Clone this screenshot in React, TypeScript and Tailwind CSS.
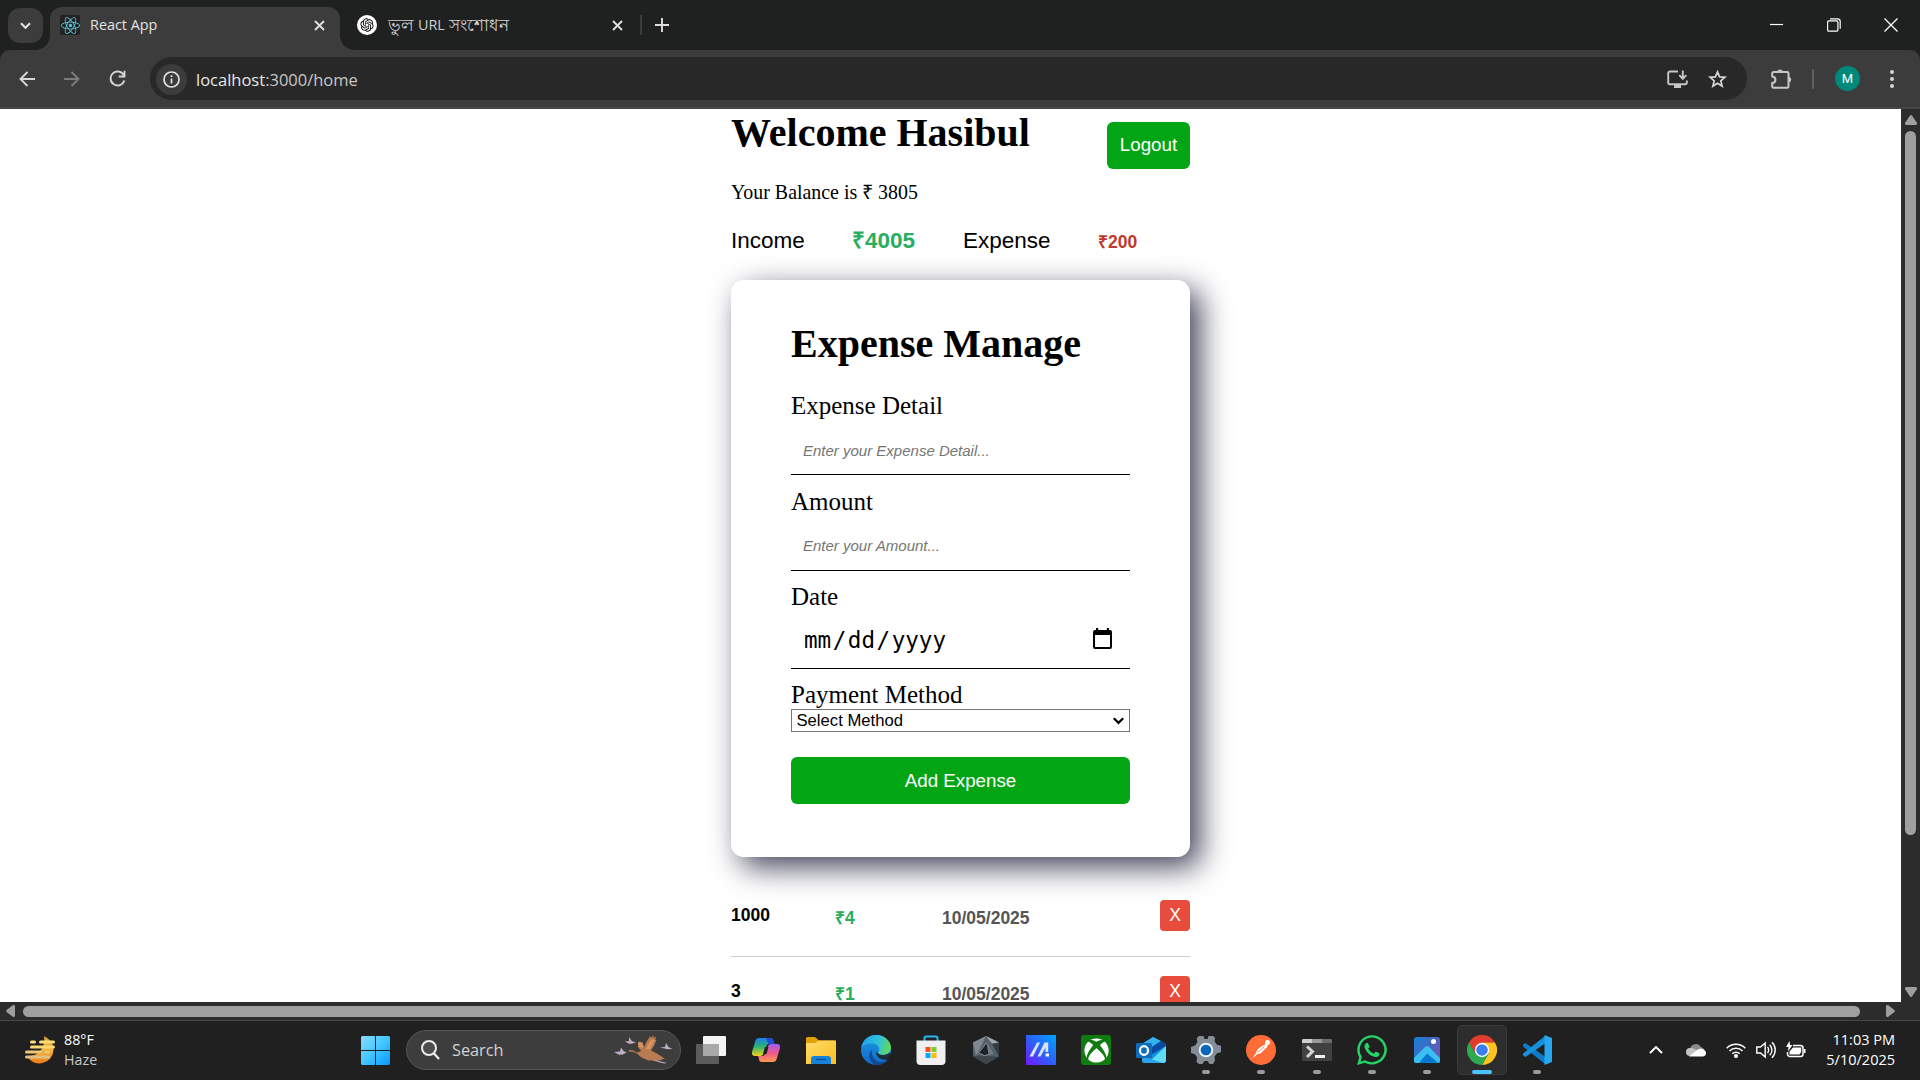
import React from "react";
import { FaReact, FaWhatsapp, FaXbox } from "react-icons/fa";
import { RiOpenaiFill } from "react-icons/ri";

const ui = "font-['Open_Sans','Noto_Sans',sans-serif]";

function Close({ className = "" }: { className?: string }) {
  return (
    <svg className={`h-[11px] w-[11px] ${className}`} viewBox="0 0 11 11" fill="none" stroke="#dedede" strokeWidth="1.9">
      <path d="M1 1l9 9M10 1l-9 9" />
    </svg>
  );
}

function TabStrip() {
  return (
    <div className="flex h-[50px] bg-[#1f2120] text-[14px] text-[#e3e3e3]">
      <div className="ml-2 mt-2 flex h-[35px] w-[35px] items-center justify-center rounded-[12px] bg-[#3c3c3c]">
        <svg width="11" height="8" viewBox="0 0 11 8" fill="none" stroke="#e3e3e3" strokeWidth="2.1">
          <path d="M1 1.2l4.5 4.6L10 1.2" />
        </svg>
      </div>
      <div className="relative ml-[7px] mt-[7px] flex h-[43px] w-[290px] items-center rounded-t-[12px] bg-[#3c3c3c] pb-[7px] pl-[10px]">
        <span className="absolute bottom-0 left-[-14px] h-[14px] w-[14px] bg-[radial-gradient(circle_at_0_0,transparent_13.5px,#3c3c3c_14px)]" />
        <span className="absolute bottom-0 right-[-14px] h-[14px] w-[14px] bg-[radial-gradient(circle_at_100%_0,transparent_13.5px,#3c3c3c_14px)]" />
        <span className="flex h-5 w-5 items-center justify-center rounded-[2px] bg-[#222]">
          <FaReact className="h-[19px] w-[19px] text-[#58c4dc]" />
        </span>
        <span className="ml-[10px] w-[219px] whitespace-nowrap text-[14.4px]">React App</span>
        <Close className="ml-[5px]" />
      </div>
      <div className="ml-[17px] mt-[7px] flex h-[36px] items-center">
        <span className="flex h-5 w-5 items-center justify-center rounded-full bg-white">
          <RiOpenaiFill className="h-4 w-4 text-black" />
        </span>
        <span className="ml-[11px] flex h-5 w-[224px] items-center gap-1 whitespace-nowrap text-[#cfcfcf]">
          <span className="text-[16.5px] leading-5">ভুল</span>
          <span className="text-[14.4px] leading-5">URL</span>
          <span className="text-[16.5px] leading-5">সংশোধন</span>
        </span>
        <Close />
        <span className="ml-[17px] h-5 w-[2px] bg-[#3c3c3c]" />
        <svg className="ml-[13px] h-[14px] w-[14px]" viewBox="0 0 14 14" stroke="#dedede" strokeWidth="1.9">
          <path d="M7 0v14M0 7h14" />
        </svg>
      </div>
      <div className="ml-auto mr-[22px] flex h-[49px] items-center gap-[43px]">
        <svg width="14" height="14" viewBox="0 0 14 14" stroke="#fff" strokeWidth="1.2"><path d="M0 6.5h13" /></svg>
        <svg width="14" height="14" viewBox="0 0 14 14" fill="none" stroke="#fff" strokeWidth="1.2">
          <rect x=".6" y="2.9" width="10.3" height="10.3" rx="1.3" />
          <path d="M3 .9h7.6a2.6 2.6 0 0 1 2.6 2.6v7.3" />
        </svg>
        <svg width="14" height="14" viewBox="0 0 14 14" stroke="#fff" strokeWidth="1.3"><path d="M.5.5l13 13M13.5.5l-13 13" /></svg>
      </div>
    </div>
  );
}

function Toolbar() {
  return (
    <div className="h-[59px] bg-[#1f2120]">
      <div className="flex h-[59px] items-center rounded-t-[10px] border-b-2 border-[#464646] bg-[#3c3c3c]">
        <svg className="ml-[19px] h-4 w-4" viewBox="0 0 16 16" fill="none" stroke="#d6d6d6" strokeWidth="1.9">
          <path d="M16 8H2M8.5 1L1.5 8l7 7" />
        </svg>
        <svg className="ml-[29px] h-4 w-4" viewBox="0 0 16 16" fill="none" stroke="#7d7d7d" strokeWidth="1.9">
          <path d="M0 8h14M7.5 1l7 7-7 7" />
        </svg>
        <svg className="ml-[29px] h-[17px] w-[17px]" viewBox="0 0 17 17" fill="none" stroke="#d6d6d6" strokeWidth="1.9">
          <path d="M15 5.6A7 7 0 1 0 15.3 10.5M15.5 .8v5.7H9.7" />
        </svg>
        <div className="ml-[24px] flex h-[43px] w-[1597px] items-center rounded-full bg-[#282828] pl-[6px] pt-px">
          <span className="flex h-[31px] w-[31px] items-center justify-center rounded-full bg-[#3c3c3c]">
            <svg width="17" height="17" viewBox="0 0 17 17" fill="none" stroke="#e3e3e3" strokeWidth="1.7">
              <circle cx="8.5" cy="8.5" r="7.5" />
              <path d="M8.5 7.5v5M8.5 4.2v1.9" />
            </svg>
          </span>
          <span className="ml-[9px] pt-[2px] text-[16.5px] text-[#c7c7c7]"><span className="text-[#e6e6e6]">localhost</span>:3000/home</span>
          <svg className="ml-auto h-[18px] w-[21px]" viewBox="0 0 21 18" fill="none" stroke="#c7c7c7" strokeWidth="1.9">
            <path d="M11 1.5H3A1.8 1.8 0 0 0 1.2 3.3v9.2A1.8 1.8 0 0 0 3 14.3h15a1.8 1.8 0 0 0 1.8-1.8V10.5M15.8 .5v8M12.3 5.2l3.5 3.6 3.5-3.6" />
            <path d="M7 15h7v3H7z" fill="#c7c7c7" stroke="none" />
          </svg>
          <svg className="ml-[20px] mr-[20px] h-[19px] w-[19px]" viewBox="0 0 19 19" fill="none" stroke="#d6d6d6" strokeWidth="1.7">
            <path d="M9.5 1.9l2.1 5 5.3.4-4.1 3.5 1.3 5.3-4.6-2.8-4.6 2.8 1.3-5.3L2.1 7.3l5.3-.4z" />
          </svg>
        </div>
        <svg className="ml-[24px] h-[22px] w-[21px]" viewBox="0 0 21 22" fill="none" stroke="#c7c7c7" strokeWidth="2">
          <path d="M2.5 4h13.7a1.3 1.3 0 0 1 1.3 1.3v13.2a1.3 1.3 0 0 1-1.3 1.3H2.5a1.3 1.3 0 0 1-1.3-1.3V15c4.3-.3 4.3-6.3 0-6.6V5.3A1.3 1.3 0 0 1 2.5 4z" />
          <path d="M6 3.5a3.2 3.2 0 0 1 6 0zM18 8.7a3 3 0 0 1 0 5.8z" fill="#c7c7c7" stroke="none" />
        </svg>
        <span className="ml-[20px] h-5 w-[2px] rounded bg-[#5f5f5f]" />
        <span className="ml-[21px] flex h-[25px] w-[25px] items-center justify-center rounded-full bg-[#00897b] font-[Roboto,sans-serif] text-[13px] text-white">M</span>
        <span className="ml-[30px] flex flex-col gap-[3px]">
          <i className="h-1 w-1 rounded-full bg-[#d6d6d6]" />
          <i className="h-1 w-1 rounded-full bg-[#d6d6d6]" />
          <i className="h-1 w-1 rounded-full bg-[#d6d6d6]" />
        </span>
      </div>
    </div>
  );
}

const label = "text-[25px] leading-[28px]";
const field =
  "block w-full border-b border-black bg-transparent pl-[12px] font-['Liberation_Sans',sans-serif] text-[15px] outline-none placeholder:italic placeholder:text-[#757575]";

function Row({ name, amount }: { name: string; amount: string }) {
  return (
    <div className="mb-[19px] flex h-[57px] items-start border-b border-[#ccc] font-['Liberation_Sans',sans-serif] text-[17.5px] font-bold leading-5">
      <span className="mt-[5px] w-[104px]">{name}</span>
      <span className="mt-[8px] w-[107px] text-[#27ae60]">{amount}</span>
      <span className="mt-[8px] text-[#555]">10/05/2025</span>
      <button className="ml-auto h-[31px] w-[30px] rounded-[4px] bg-[#e74c3c] pb-px text-[17.5px] font-normal text-white">X</button>
    </div>
  );
}

function Page() {
  return (
    <div className="flex-1 overflow-hidden bg-white font-['Liberation_Serif',serif] text-black">
      <div className="ml-[731px] w-[459px]">
        <div className="flex h-[72px] justify-between">
          <h1 className="pt-px text-[40px] font-bold leading-[46px]">Welcome Hasibul</h1>
          <button className="mt-[13px] h-[47px] w-[83px] rounded-[6px] bg-[#02a614] font-['Liberation_Sans',sans-serif] text-[18.75px] text-white">Logout</button>
        </div>
        <p className="text-[19.9px] leading-[23px]">Your Balance is ₹ 3805</p>
        <div className="mt-6 flex h-[26px] font-['Liberation_Sans',sans-serif] text-[22.5px] leading-[26px]">
          <span className="w-[121px]">Income</span>
          <span className="w-[111px] font-bold text-[#27ae60]">₹4005</span>
          <span className="w-[135px]">Expense</span>
          <span className="text-[17.5px] font-bold leading-[29px] text-[#c0392b]">₹200</span>
        </div>
        <div className="relative mt-[26px] h-[577px] rounded-[12.5px] bg-white px-[60px] pt-[41px] shadow-[10px_10px_30px_0_#42445a]">
          <h1 className="text-[40px] font-bold leading-[46px]">Expense Manage</h1>
          <div className={`${label} mt-[25px]`}>Expense Detail</div>
          <input className={`${field} h-[55px] pt-[6px]`} placeholder="Enter your Expense Detail..." />
          <div className={`${label} mt-[13px]`}>Amount</div>
          <input className={`${field} h-[55px] pt-[4px]`} placeholder="Enter your Amount..." />
          <div className={`${label} mt-[12px]`}>Date</div>
          <div className="flex h-[58px] items-center justify-between border-b border-black pl-[13px] pr-[18px] font-['DejaVu_Sans_Mono',monospace] text-[22.6px]">
            <span className="pt-[2px]">mm<span className="px-[1.5px]">/</span>dd<span className="px-[1.5px]">/</span>yyyy</span>
            <svg className="mb-[3px] h-[21px] w-[19px]" viewBox="0 0 19 21">
              <path d="M3 0h2.2v2h8.6V0H16v2h1a2 2 0 0 1 2 2v15a2 2 0 0 1-2 2H2a2 2 0 0 1-2-2V4a2 2 0 0 1 2-2h1zM2 7v12h15V7z" fillRule="evenodd" />
            </svg>
          </div>
          <div className={`${label} mt-[12px]`}>Payment Method</div>
          <div className="flex h-[23px] items-center justify-between border border-[#767676] pl-[4.5px] pr-[5px] font-['Liberation_Sans',sans-serif] text-[16.67px] leading-5">
            Select Method
            <svg width="11" height="8" viewBox="0 0 11 8" fill="none" stroke="#000" strokeWidth="2.2"><path d="M.8 1.2l4.7 4.7 4.7-4.7" /></svg>
          </div>
          <button className="mt-[25px] h-[47px] w-full rounded-[6px] bg-[#02a614] pt-px font-['Liberation_Sans',sans-serif] text-[18.75px] text-white">Add Expense</button>
        </div>
        <div className="relative mt-[43px]">
          <Row name="1000" amount="₹4" />
          <Row name="3" amount="₹1" />
        </div>
      </div>
    </div>
  );
}

function Icon({ children, dot, active }: { children: React.ReactNode; dot?: boolean; active?: boolean }) {
  return (
    <div className="flex w-[55.1px] justify-center">
      <div className={`relative flex h-[50px] w-[50px] items-center justify-center rounded-[5px] ${active ? "border border-[#3a3a3a] bg-[#2d2d2d]" : ""}`}>
        {children}
        {dot && <span className="absolute bottom-[1px] left-[21px] h-1 w-2 rounded-full bg-[#9a9a9a]" />}
        {active && <span className="absolute bottom-0 left-[14px] h-1 w-5 rounded-full bg-[#4cc2ff]" />}
      </div>
    </div>
  );
}

function Goose() {
  return (
    <svg width="59" height="30" viewBox="0 0 59 30">
      <g fill="#bdaec4">
        <path d="M0 17l6-.5 1-4 3 4 3 .5-4 2.5-4 .3z" />
        <path d="M11 6.5l4-.5V2l3 4.3 4 1-4 1.400h-3z" />
        <path d="M46 12.5l5-.5 1-4 2.500 4 4 2-5 .3z" />
        <path d="M39 24l8 2.5 6 1.5-3 .6-11-3.2z" />
      </g>
      <path d="M14 16.5l1.800-1.500 3 .2 4 2.300 4.500-1.500-3-3.500-.5-4.500 1.500-1.500 3.500 1 1.500 5 1.500-4.500 4.500-7 .8 2L39.500 0l-.2 3 3-1.500L41 4.500l1.500.2-2.500 6-3 4.800 6 3 7.500 5-4 1.800-12 .3-7-3-4.500-4.100-4-1.700z" fill="#b97c50" />
      <path d="M24.500 11.500l0-4 3.500.5 1 5zM31.500 14l5.500-9 4-.5-5 9.500z" fill="#d99463" />
    </svg>
  );
}

function Taskbar() {
  return (
    <div className={`flex h-[60px] items-center border-t border-[#474747] bg-[#202020] pb-px ${ui}`}>
      <svg className="ml-[25px] h-[28px] w-[30px]" viewBox="0 0 30 28">
        <defs>
          <linearGradient id="moon" x1="0" y1="0" x2="0" y2="1"><stop offset="0" stopColor="#d99a3c" /><stop offset=".5" stopColor="#f2b43c" /><stop offset="1" stopColor="#ee7b16" /></linearGradient>
        </defs>
        <path d="M19 0c6 3 10 8 9.5 14A14 13.5 0 0 1 2 20c9 1 19-6 17-20z" fill="url(#moon)" />
        <g strokeWidth="3" strokeLinecap="round" fill="none">
          <path d="M6.5 6h3M15.5 6h13" stroke="#ffdc73" />
          <path d="M6.5 11h22" stroke="#fbd772" />
          <path d="M1.5 16h14M20.5 16h3" stroke="#ecc777" />
          <path d="M1.5 21h22" stroke="#dec084" />
        </g>
      </svg>
      <div className="ml-[9px] w-[297px] pb-px text-[14.3px] leading-5 text-white">
        <div>88°F</div>
        <div className="text-[#c8c8c8]">Haze</div>
      </div>
      <svg className="h-[29px] w-[29px]" viewBox="0 0 29 29">
        <defs><linearGradient id="win" x1="0" y1="0" x2="1" y2="1"><stop offset="0" stopColor="#8adcff" /><stop offset=".5" stopColor="#43c6fd" /><stop offset="1" stopColor="#0a96ff" /></linearGradient></defs>
        <path d="M1 0h13v14H0V1zM15 0h13l1 1v13H15zM0 15h14v14H1l-1-1zM15 15h14v13l-1 1H15z" fill="url(#win)" />
      </svg>
      <div className="ml-4 mr-[2px] flex h-10 w-[275px] items-center rounded-full border border-[#555] bg-[#3d3d3d] pl-[14px] pr-[7px]">
        <svg width="19" height="20" viewBox="0 0 19 20" fill="none" stroke="#ededed" strokeWidth="2"><circle cx="8" cy="8" r="7" fill="#4d4d4d" /><path d="M13 13.5l5 5.5" strokeWidth="2.3" /></svg>
        <span className="ml-[12px] pt-px text-[16.3px] text-[#d2d2d2]">Search</span>
        <span className="ml-auto"><Goose /></span>
      </div>
      <Icon>
        <svg width="30" height="28" viewBox="0 0 30 28">
          <rect y="8" width="23" height="20" rx="1" fill="#5c5c5c" /><rect x="7" width="23" height="20" rx="1" fill="#f4f4f4" /><path d="M7 8h16v12H7z" fill="#a9a9a9" />
        </svg>
      </Icon>
      <Icon>
        <svg width="28" height="26" viewBox="0 0 28 26">
          <defs>
            <linearGradient id="cpA" x1="0" y1="0" x2="0" y2="1"><stop offset="0" stopColor="#1a7ff0" /><stop offset=".5" stopColor="#32b56c" /><stop offset="1" stopColor="#f5d21d" /></linearGradient>
            <linearGradient id="cpB" x1="0" y1="0" x2="0" y2="1"><stop offset="0" stopColor="#a35cf3" /><stop offset=".5" stopColor="#f0588d" /><stop offset="1" stopColor="#ff9a4c" /></linearGradient>
          </defs>
          <path d="M7 1h11c2 0 3 1 3.5 3l1 3h-5c-2 0-3 1-3.5 3l-2 6c-.8 2-2 3-4 3H3c-3 0-3.5-2-2.700-5l3-10C4 2 5 1 7 1z" fill="url(#cpA)" />
          <path d="M14 1h4c2 0 3 1 3.5 3l1 3h-6z" fill="#234bd6" />
          <path d="M21 25H10c-2 0-3-1-3-3l-1-3h4c2 0 3-1 3.5-3l2-6c.8-2 2-3 4-3H25c3 0 3.500 2 2.700 5l-3 10c-.7 2-1.700 3-3.700 3z" fill="url(#cpB)" />
          <path d="M13 10h3.500l-2 7H11z" fill="#202020" />
        </svg>
      </Icon>
      <Icon>
        <svg width="30" height="27" viewBox="0 0 30 27">
          <defs><linearGradient id="fold" x1="0" y1="0" x2="1" y2="1"><stop offset="0" stopColor="#ffdc6b" /><stop offset="1" stopColor="#fcbe21" /></linearGradient></defs>
          <path d="M0 1.5A1.5 1.5 0 0 1 1.5 0H9l4 3.500h15a2 2 0 0 1 2 2V9H0z" fill="#e0a008" />
          <path d="M0 6h9l4-2.500h17V27H0z" fill="url(#fold)" />
          <path d="M5 27v-5a3 3 0 0 1 3-3h14a3 3 0 0 1 3 3v5z" fill="#1583d8" /><path d="M10 22.5h10" stroke="#0a4f96" strokeWidth="1.3" />
        </svg>
      </Icon>
      <Icon>
        <svg width="30" height="30" viewBox="0 0 30 30">
          <defs>
            <linearGradient id="edA" x1="0" y1=".3" x2="1" y2=".5"><stop offset="0" stopColor="#1ca0e8" /><stop offset=".55" stopColor="#2fc2df" /><stop offset="1" stopColor="#63d957" /></linearGradient>
            <linearGradient id="edB" x1="0" y1="0" x2="0" y2="1"><stop offset="0" stopColor="#1b9be2" /><stop offset="1" stopColor="#1167c9" /></linearGradient>
          </defs>
          <circle cx="15" cy="15" r="15" fill="url(#edB)" />
          <path d="M.3 13C1.5 5 7.5 0 15 0c9 0 15 6.5 15 12.5 0 4.5-3.5 7.5-8 7.5-3.5 0-5.2-1.2-5-2.3.2-.9 1.3-1.4 1.3-3.5C18.3 11 15 8.5 11 8.5 6 8.5 1.5 10.5.3 13z" fill="url(#edA)" />
          <path d="M11.5 14.5C9.5 20 13 27 20 27c3 0 5-.8 7.5-2.5C25 28 20.5 30 15.5 30 9 29 5.500 19 11.500 14.500z" fill="#104a93" />
          <path d="M17 17.7c-.2 1.1 1.5 2.3 5 2.3 2.8 0 5-.9 6.600-2.500L30 21l-2.500 3.500C24 26 15.500 24 15 17.500z" fill="#202020" opacity=".85" />
        </svg>
      </Icon>
      <Icon>
        <svg width="30" height="30" viewBox="0 0 30 30">
          <path d="M8.5 6V3a1.5 1.5 0 0 1 1.5-1.5h10A1.5 1.5 0 0 1 21.5 3v3" fill="none" stroke="#2bb4ee" strokeWidth="2" />
          <path d="M.5 5.5h29V26a4 4 0 0 1-4 4h-21a4 4 0 0 1-4-4z" fill="#f0f0f0" />
          <path d="M9.5 12h5v5h-5z" fill="#f1511b" /><path d="M15.5 12h5v5h-5z" fill="#80cc28" /><path d="M9.5 18h5v5h-5z" fill="#00adef" /><path d="M15.5 18h5v5h-5z" fill="#fbbc09" />
        </svg>
      </Icon>
      <Icon>
        <svg width="26" height="28" viewBox="0 0 26 28">
          <path d="M13 0l13 6.5v14L13 28 0 20.5v-14z" fill="#566069" />
          <path d="M13 0l13 6.5-7 1z" fill="#a1a9b0" /><path d="M0 6.5L13 0 3 20z" fill="#7f8890" /><path d="M26 6.5v14L19 8z" fill="#343b41" /><path d="M0 20.5L13 28l13-7.5-22-1z" fill="#3f474e" />
          <path d="M13.500 7l6 10.500-8 2L5.500 17z" fill="#1d2226" stroke="#8f979e" strokeWidth=".9" />
          <path d="M13.500 6.500l6.500 11-4.500 1.300z" fill="#727c84" />
        </svg>
      </Icon>
      <Icon>
        <svg width="30" height="30" viewBox="0 0 30 30">
          <defs><linearGradient id="ma" x1="0" y1="1" x2="1" y2="0"><stop offset="0" stopColor="#7416ff" /><stop offset=".5" stopColor="#2b62fb" /><stop offset="1" stopColor="#00a4ff" /></linearGradient></defs>
          <path d="M0 0h30v30H0z" fill="url(#ma)" />
          <path d="M3.500 21.500L11 7.500h3L7 21.500zM11.500 21.500l7-14h3.700v9.500h-2.700v-4.500l-5 9z" fill="#d6e4ff" /><path d="M19.500 18.500h3.500v3h-3.500z" fill="#fff" />
        </svg>
      </Icon>
      <Icon>
        <span className="flex h-[30px] w-[30px] items-center justify-center rounded-[3px] bg-[#107c10]"><FaXbox className="h-[25px] w-[25px] text-white" /></span>
      </Icon>
      <Icon>
        <svg width="30" height="26" viewBox="0 0 30 26">
          <path d="M6 7L17 0l13 7v16a3 3 0 0 1-3 3H9a3 3 0 0 1-3-3z" fill="#1490df" />
          <path d="M17 0l8 4-14 9-5-4V7z" fill="#33b1ef" /><path d="M25 4l5 3v2L13 19l-3-5z" fill="#0a4aa0" /><path d="M30 9v14a3 3 0 0 1-3 3H12z" fill="#5fdcf8" />
          <path d="M6 19l21 7H9a3 3 0 0 1-3-3z" fill="#2aa5ec" />
          <rect y="6" width="16" height="15" rx="1.5" fill="#0f6cbd" /><ellipse cx="8" cy="13.5" rx="4" ry="4.3" fill="none" stroke="#fff" strokeWidth="2.2" />
        </svg>
      </Icon>
      <Icon dot>
        <svg width="30" height="28" viewBox="0 0 30 28">
          <path d="M11 0h1.5l1 3h3l1-3H22l2 1.5-.4 4 2.4 3.2 4 1v6.6l-4 1-2.4 3.2.4 4L22 28h-3.5l-2-3h-3l-2 3H8l-2.500-2 .6-4.500-2.200-3.200L0 17v-6l4-1.500 2.300-3.300L5.800 2 8 0z" fill="#848d95" />
          <circle cx="15" cy="14" r="6.3" fill="#0b66b8" stroke="#e8f2fa" strokeWidth="1.9" />
        </svg>
      </Icon>
      <Icon dot>
        <svg width="30" height="30" viewBox="0 0 30 30">
          <circle cx="15" cy="15" r="15" fill="#ff6c37" />
          <circle cx="21.500" cy="7.500" r="2.500" fill="#fff" />
          <path d="M20 9l2 2-7.500 7.500-3 .5-5 4.500 3.800-6.200c1-3.500 4-5.500 9.700-8.300z" fill="#fff" /><path d="M11.500 17.500l7-6" stroke="#ff6c37" strokeWidth=".8" />
        </svg>
      </Icon>
      <Icon dot>
        <svg width="30" height="22" viewBox="0 0 30 22">
          <rect width="30" height="22" rx="1" fill="#414141" /><path d="M0 1l1-1h9v4H0z" fill="#cfcfcf" /><path d="M10 0h10v4H10z" fill="#9a9a9a" /><path d="M20 0h9l1 1v3H20z" fill="#6d6d6d" />
          <path d="M5 7.5l5.500 5L5 18" fill="none" stroke="#d5d5d5" strokeWidth="3" /><path d="M13 16h10v3H13z" fill="#f0f0f0" />
        </svg>
      </Icon>
      <Icon dot><FaWhatsapp className="h-[34px] w-[34px] text-[#25d366]" /></Icon>
      <Icon dot>
        <svg width="26" height="26" viewBox="0 0 26 26">
          <defs><linearGradient id="ph" x1="0" y1="0" x2="1" y2=".6"><stop offset="0" stopColor="#1381d6" /><stop offset="1" stopColor="#6a57b5" /></linearGradient></defs>
          <rect width="26" height="26" rx="2.5" fill="url(#ph)" />
          <path d="M0 21L11 10a3 3 0 0 1 4.200 0L26 21v2.500a2.500 2.500 0 0 1-2.500 2.500h-21A2.500 2.500 0 0 1 0 23.500z" fill="#38c0f2" />
          <path d="M5 26l8-9.500 11 9.300z" fill="#0a77cf" /><circle cx="19.500" cy="4.500" r="2.500" fill="#fff" />
        </svg>
      </Icon>
      <Icon active>
        <svg width="30" height="30" viewBox="0 0 30 30">
          <path d="M2 7.5A15 15 0 0 1 28 7.5H15L8.5 18.7z" fill="#e33b2e" />
          <path d="M28 7.500A15 15 0 0 1 15 30l6.500-11.300L15 7.500z" fill="#fcc31e" />
          <path d="M15 30A15 15 0 0 1 2 7.500l6.500 11.200h13z" fill="#2da94f" />
          <circle cx="15" cy="15" r="7.200" fill="#fff" /><circle cx="15" cy="15" r="5.800" fill="#3b7ded" />
        </svg>
      </Icon>
      <Icon dot>
        <svg width="30" height="30" viewBox="0 0 30 30">
          <path d="M1 9.500L3.500 8 23 21.500V29L1 11.500z" fill="#0b7dc6" />
          <path d="M1 20.500L3.500 22 23 8.500V1L1 18.500z" fill="#1490dc" />
          <path d="M22.500 0L30 3v24l-7.500 3z" fill="#27a7f2" />
        </svg>
      </Icon>
      <div className="ml-auto mr-[25px] flex items-center">
        <svg width="14" height="8" viewBox="0 0 14 8" fill="none" stroke="#fff" strokeWidth="1.9"><path d="M1 7l6-6 6 6" /></svg>
        <svg className="ml-[23px]" width="20" height="14" viewBox="0 0 20 14">
          <path d="M4 6a6 6 0 0 1 11-2l3 2-8 5z" fill="#8c8c8c" /><path d="M4 13a4 4 0 0 1 0-8c3-.5 5 1 8 3l-5 5z" fill="#c4c4c4" /><path d="M3 13.500L11 7c4-3 9-.5 9 3a3.300 3.300 0 0 1-3.500 3.500z" fill="#fff" />
        </svg>
        <svg className="ml-[20px]" width="20" height="16" viewBox="0 0 20 16" fill="none" stroke="#fff" strokeWidth="1.5">
          <path d="M.7 6.2a13.200 13.200 0 0 1 18.600 0M3.500 9a9.200 9.200 0 0 1 13 0M6.300 11.800a5.200 5.200 0 0 1 7.400 0" /><circle cx="10" cy="14" r="1.300" fill="#fff" />
        </svg>
        <svg className="ml-[10px]" width="20" height="18" viewBox="0 0 20 18" fill="none" stroke="#fff" strokeWidth="1.4">
          <path d="M.8 6v6h3.700L9.200 16V2L4.500 6zM11.500 6c1.500 1.500 1.500 4.500 0 6M13.700 3.700c3 3 3 7.600 0 10.600M16 1.300c4.300 4.300 4.300 11 0 15.400" />
        </svg>
        <svg className="ml-[10px]" width="20" height="18" viewBox="0 0 20 18">
          <path d="M7 4.500h7.500A2.500 2.500 0 0 1 17 7v6a2.500 2.500 0 0 1-2.500 2.500H4A2.500 2.500 0 0 1 1.500 13v-2" fill="none" stroke="#fff" strokeWidth="1.500" />
          <path d="M7 6.500h8.200v4.500l-1.700 2.500H3.500v-3zM18 8h1.500v4H18zM3.500 0L0 6h2.500L2 10.500 6.500 4H4z" fill="#fff" />
        </svg>
        <div className="w-[89px] whitespace-nowrap pb-px text-right text-[14.5px] leading-5 text-white">
          <div>11:03 PM</div>
          <div>5/10/2025</div>
        </div>
      </div>
    </div>
  );
}

export default function App() {
  return (
    <div className={`flex h-[1080px] w-[1920px] flex-col overflow-hidden bg-[#202020] ${ui}`}>
      <TabStrip />
      <Toolbar />
      <div className="flex h-[893px]">
        <Page />
        <div className="flex w-[19px] flex-col items-center bg-[#2c2c2c] pb-[5px] pt-[6px]">
          <svg width="12" height="10" viewBox="0 0 12 10" fill="#9f9f9f"><path d="M5 .6q1-1 2 0L12 8v1l-1 1H1L0 9V8z" /></svg>
          <div className="mt-[6px] h-[704px] w-[11px] rounded-full bg-[#9f9f9f]" />
          <svg className="mt-auto" width="12" height="10" viewBox="0 0 12 10" fill="#9f9f9f"><path d="M5 9.4q1 1 2 0L12 2V1l-1-1H1L0 1v1z" /></svg>
        </div>
      </div>
      <div className="flex h-[18px] items-center bg-[#2c2c2c] pl-[6px] pr-[25px]">
        <svg width="9" height="12" viewBox="0 0 9 12" fill="#9f9f9f"><path d="M.6 5q-1 1 0 2L7 12h1l1-1V1L8 0H7z" /></svg>
        <div className="ml-2 h-[11px] w-[1837px] rounded-full bg-[#9f9f9f]" />
        <svg className="ml-auto" width="9" height="12" viewBox="0 0 9 12" fill="#9f9f9f"><path d="M8.4 5q1 1 0 2L2 12H1l-1-1V1l1-1h1z" /></svg>
      </div>
      <Taskbar />
    </div>
  );
}
